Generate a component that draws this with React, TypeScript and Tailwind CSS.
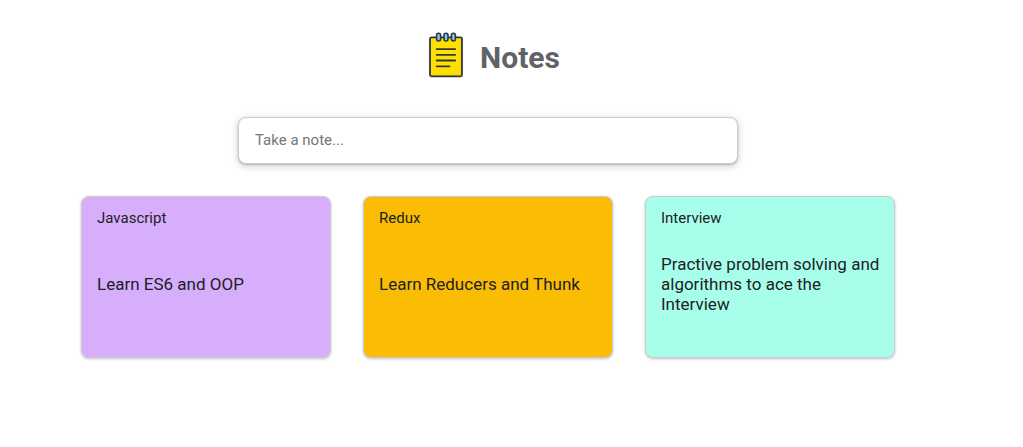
type Note = { title: string; body: string; color: string };

const notes: Note[] = [
  { title: "Javascript", body: "Learn ES6 and OOP", color: "bg-[#d7aefb]" },
  { title: "Redux", body: "Learn Reducers and Thunk", color: "bg-[#fbbc04]" },
  {
    title: "Interview",
    body: "Practive problem solving and algorithms to ace the Interview",
    color: "bg-[#a7ffeb]",
  },
];

function NotepadIcon() {
  return (
    <svg viewBox="0 0 60 60" className="h-15 w-15" aria-hidden="true">
      <rect x="14" y="9.3" width="32" height="39" rx="1.5" fill="#ffe100" />
      <path d="M14 46.3h29.7v-37H46v39H14z" fill="#fdcf00" />
      <rect x="14" y="9.3" width="32" height="39" rx="1.5" fill="none" stroke="#2d3748" strokeWidth="1.8" />
      {[22.6, 30, 37.4].map((x) => (
        <rect key={x} x={x - 2} y="5.2" width="4" height="7.8" rx="2" fill="#84c9ec" stroke="#2d3748" strokeWidth="1.6" />
      ))}
      <path d="M20.6 21.1h18.6M20.6 26.8h18.6M20.6 32.5h18.6M20.6 38.3h13" stroke="#33383c" strokeWidth="1.8" strokeLinecap="round" />
    </svg>
  );
}

function NoteCard({ title, body, color }: Note) {
  return (
    <article
      className={`flex min-h-[162px] w-[250px] flex-col rounded-lg border border-[#ccc] pt-3 pr-3 pb-[43px] pl-[15px] text-[#202124] shadow-[0_1px_3px_rgba(0,0,0,0.25)] ${color}`}
    >
      <h2 className="text-[15px] leading-[18px]">{title}</h2>
      <div className="mt-[27px] flex min-h-15 flex-1 items-center">
        <p className="text-[17px] leading-5">{body}</p>
      </div>
    </article>
  );
}

export default function App() {
  return (
    <main className="min-h-screen bg-white pr-[47px] pb-8 font-['Roboto',sans-serif]">
      <header className="flex items-center justify-center gap-1 pt-7">
        <NotepadIcon />
        <h1 className="text-[30px] leading-9 font-bold text-[#5f6368]">Notes</h1>
      </header>
      <form className="mt-[29px] flex justify-center px-4" onSubmit={(e) => e.preventDefault()}>
        <input
          type="text"
          aria-label="Take a note"
          placeholder="Take a note..."
          className="h-[47px] w-full max-w-[500px] rounded-lg border border-[#ccc] bg-white px-4 pb-0.5 text-[15px] text-[#202124] shadow-[0_1px_2px_rgba(60,64,67,0.3),0_2px_6px_2px_rgba(60,64,67,0.15)] outline-none placeholder:text-[#757575]"
        />
      </form>
      <section aria-label="Notes" className="mt-8 flex flex-wrap justify-center gap-8">
        {notes.map((note) => (
          <NoteCard key={note.title} {...note} />
        ))}
      </section>
    </main>
  );
}
